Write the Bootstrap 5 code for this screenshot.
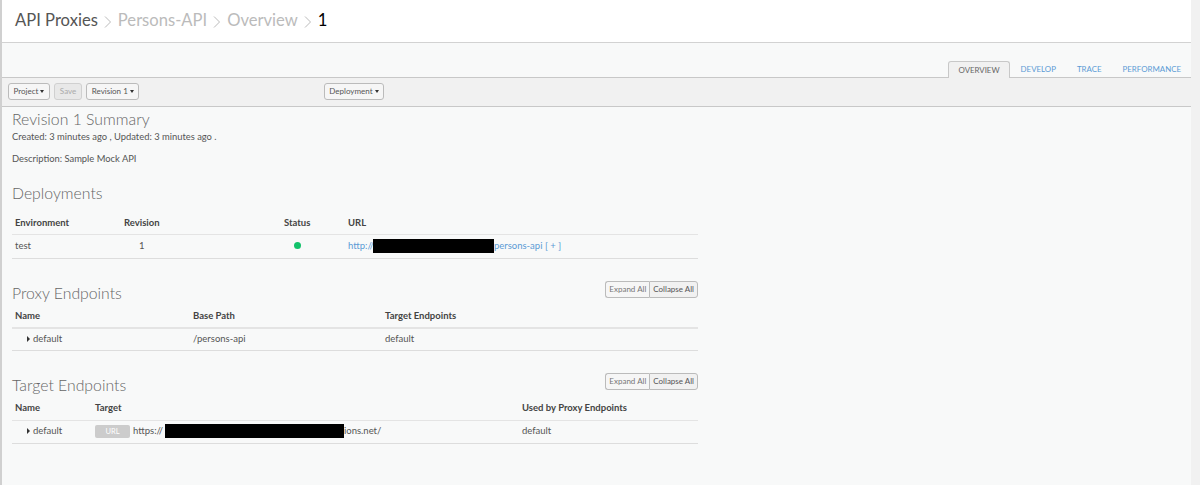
<!DOCTYPE html>
<html lang="en">
<head>
    <meta charset="UTF-8">
    <meta name="viewport" content="width=device-width, initial-scale=1.0">
    <title>API Proxies</title>
    <link href="https://cdn.jsdelivr.net/npm/bootstrap@5.3.0/dist/css/bootstrap.min.css" rel="stylesheet">
    <style>
        html, body { height: 485px; overflow: hidden; }
        body {
            font-family: Lato, "Liberation Sans", sans-serif;
            font-size: 9.5px;
            color: #555;
            background-color: #f1f1f1;
        }
        .page-shell {
            width: 1191px;
            height: 485px;
            background: #f8f9f9;
            border-left: 2px solid #d0d0d0;
        }
        .crumb-bar {
            height: 43px;
            background: #fff;
            border-bottom: 1px solid #d2d2d2;
            padding: 7px 0 0 13px;
            font-size: 16.6px;
            line-height: 26px;
            color: #555;
        }
        .crumb-bar .faded { color: #bbb; }
        .crumb-bar .here { color: #000; }
        .crumb-sep { width: 20px; height: 14px; vertical-align: -3px; }
        .tab-bar {
            height: 35px;
            border-bottom: 1px solid #c8c8c8;
        }
        .tab-item {
            font-size: 7.9px;
            line-height: 16px;
            padding: 0 10px;
            height: 17px;
            color: #5b9bd5;
            text-decoration: none;
            margin-bottom: -1px;
            margin-left: 1px;
        }
        .tab-item.on {
            color: #666;
            background: #f1f1f1;
            border: 1px solid #c8c8c8;
            border-bottom: 0;
            border-radius: 3px 3px 0 0;
            padding: 0 9px;
        }
        .tool-bar {
            height: 29px;
            background: #f1f1f1;
            border-bottom: 1px solid #c8c8c8;
            padding: 5px 0 0 6px;
        }
        .tool-btn {
            font-size: 8px;
            line-height: 15px;
            color: #555;
            padding: 0 4.5px;
            height: 17px;
            background: #f6f6f6;
            border: 1px solid #bbb;
            border-radius: 3px;
            margin-right: 4.5px;
        }
        .tool-btn.off { color: #aaa; background: #e8e8e8; border-color: #d0d0d0; }
        .tool-btn.push { margin-left: 180px; }
        .caret-down {
            display: inline-block;
            width: 0;
            height: 0;
            margin-left: 2px;
            vertical-align: 1px;
            border-top: 3px solid #333;
            border-left: 2.5px solid transparent;
            border-right: 2.5px solid transparent;
        }
        .main-area { width: 696px; padding-left: 10px; }
        .sec-title {
            font-size: 15.8px;
            font-weight: 300;
            line-height: 22px;
            color: #666;
            margin: 0;
        }
        .summary-title { margin-top: 1px; }
        .info-line { font-size: 9.4px; line-height: 14px; margin: 0; }
        .desc-line { margin-top: 8px; }
        .deploy-title { margin-top: 16px; }
        .sec-head { height: 22px; margin-top: 23px; }
        .btn-pair { margin-top: -1px; }
        .group-btn {
            font-size: 8px;
            line-height: 15px;
            color: #777;
            padding: 0 3px;
            height: 17px;
            background: #f6f6f6;
            border: 1px solid #bbb;
        }
        .group-btn:first-child { border-radius: 3px 0 0 3px; border-right: 0; }
        .group-btn:last-child { border-radius: 0 3px 3px 0; color: #555; background: #f1f1f1; }
        .data-table {
            width: 686px;
            table-layout: fixed;
            border-collapse: collapse;
            color: #555;
        }
        .data-table th {
            font-weight: 700;
            color: #444;
            height: 24px;
            padding: 2px 3px 0;
            border-bottom: 2px solid #e4e4e4;
        }
        .data-table td {
            height: 23px;
            padding: 0 3px;
            border-bottom: 1px solid #ddd;
        }
        .thin-head th { border-bottom-width: 1px; padding-top: 0; }
        .deploy-table th { height: 30px; padding-top: 8px; }
        .deploy-table td { height: 24px; }
        .rev-num { padding-left: 15px; }
        .row-caret {
            display: inline-block;
            width: 0;
            height: 0;
            margin: 0 3px 0 12px;
            border-left: 3px solid #333;
            border-top: 3px solid transparent;
            border-bottom: 3px solid transparent;
        }
        .status-dot {
            display: inline-block;
            width: 7px;
            height: 7px;
            border-radius: 50%;
            background: #13c26b;
            margin-left: 10px;
        }
        .blackout { display: inline-block; height: 14px; background: #000; vertical-align: -4px; }
        .blackout.short { width: 121px; margin-left: -1px; }
        .blackout.long { width: 179px; margin-left: 2px; }
        .link-blue { color: #5b9bd5; text-decoration: none; }
        .url-tag {
            display: inline-block;
            width: 35px;
            height: 13px;
            line-height: 13px;
            margin-right: 3px;
            text-align: center;
            font-size: 7.5px;
            color: #fff;
            background: #ccc;
            border-radius: 2px;
        }
    </style>
</head>
<body>

<div class="page-shell">
    <div class="crumb-bar">API Proxies<svg class="crumb-sep" viewBox="0 0 20 14"><path d="M7 1.5 12.5 7 7 12.5" fill="none" stroke="#bbb"/></svg><span class="faded">Persons-API</span><svg class="crumb-sep" viewBox="0 0 20 14"><path d="M7 1.5 12.5 7 7 12.5" fill="none" stroke="#bbb"/></svg><span class="faded">Overview</span><svg class="crumb-sep" viewBox="0 0 20 14"><path d="M7 1.5 12.5 7 7 12.5" fill="none" stroke="#bbb"/></svg><span class="here">1</span></div>

    <div class="tab-bar d-flex justify-content-end align-items-end">
        <a class="tab-item on" href="#">OVERVIEW</a>
        <a class="tab-item" href="#">DEVELOP</a>
        <a class="tab-item" href="#">TRACE</a>
        <a class="tab-item" href="#">PERFORMANCE</a>
    </div>

    <div class="tool-bar d-flex align-items-start">
        <button class="tool-btn">Project<span class="caret-down"></span></button>
        <button class="tool-btn off">Save</button>
        <button class="tool-btn">Revision 1<span class="caret-down"></span></button>
        <button class="tool-btn push">Deployment<span class="caret-down"></span></button>
    </div>

    <div class="main-area">
        <h1 class="sec-title summary-title">Revision 1 Summary</h1>
        <p class="info-line">Created: 3 minutes ago , Updated: 3 minutes ago .</p>
        <p class="info-line desc-line">Description: Sample Mock API</p>

        <h2 class="sec-title deploy-title">Deployments</h2>
        <table class="data-table thin-head deploy-table">
            <colgroup><col style="width:109px"><col style="width:160px"><col style="width:64px"><col></colgroup>
            <tr><th>Environment</th><th>Revision</th><th>Status</th><th>URL</th></tr>
            <tr>
                <td>test</td>
                <td><span class="rev-num">1</span></td>
                <td><span class="status-dot"></span></td>
                <td><a class="link-blue" href="#">http://<span class="blackout short"></span>persons-api</a> <a class="link-blue" href="#">[ + ]</a></td>
            </tr>
        </table>

        <div class="sec-head d-flex justify-content-between align-items-start">
            <h2 class="sec-title">Proxy Endpoints</h2>
            <div class="btn-pair d-flex"><button class="group-btn">Expand All</button><button class="group-btn">Collapse All</button></div>
        </div>
        <table class="data-table">
            <colgroup><col style="width:178px"><col style="width:192px"><col></colgroup>
            <tr><th>Name</th><th>Base Path</th><th>Target Endpoints</th></tr>
            <tr><td><span class="row-caret"></span>default</td><td>/persons-api</td><td>default</td></tr>
        </table>

        <div class="sec-head d-flex justify-content-between align-items-start">
            <h2 class="sec-title">Target Endpoints</h2>
            <div class="btn-pair d-flex"><button class="group-btn">Expand All</button><button class="group-btn">Collapse All</button></div>
        </div>
        <table class="data-table thin-head">
            <colgroup><col style="width:80px"><col style="width:427px"><col></colgroup>
            <tr><th>Name</th><th>Target</th><th>Used by Proxy Endpoints</th></tr>
            <tr><td><span class="row-caret"></span>default</td><td><span class="url-tag">URL</span>https://<span class="blackout long"></span>ions.net/</td><td>default</td></tr>
        </table>
    </div>
</div>

<script src="https://cdn.jsdelivr.net/npm/bootstrap@5.3.0/dist/js/bootstrap.bundle.min.js"></script>
</body>
</html>
